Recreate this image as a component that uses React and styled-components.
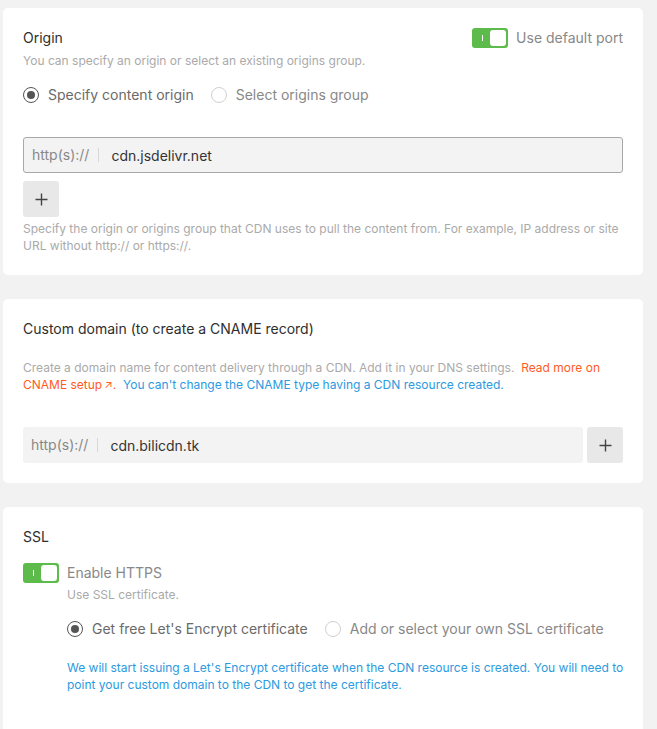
import React from 'react';
import styled, { createGlobalStyle } from 'styled-components';

const GlobalStyle = createGlobalStyle`
  html, body {
    margin: 0;
    padding: 0;
    background: #f2f2f2;
    font-family: Inter, "Noto Sans", "Liberation Sans", sans-serif;
  }
`;

const Page = styled.div`
  display: flex;
  flex-direction: column;
  gap: 24px;
  width: 640px;
  padding: 8px 0 24px 3px;
`;

const Card = styled.section`
  background: #fff;
  border-radius: 5px;
  padding: 20px 20px ${p => p.$bottom || 20}px;
`;

const HeaderRow = styled.div`
  display: flex;
  align-items: center;
  justify-content: space-between;
  height: 20px;
`;

const Title = styled.h2`
  margin: 0;
  font-size: 14px;
  line-height: 20px;
  font-weight: 400;
  color: #2e2e2e;
`;

const Hint = styled.p`
  margin: ${p => p.$top || 0}px ${p => p.$right || 0}px 0 ${p => p.$left || 0}px;
  font-size: 12px;
  line-height: 17px;
  color: ${p => p.$color || '#aaa'};
`;

const Orange = styled.span`
  color: #ff5b1f;
`;

const Blue = styled.span`
  color: #2b9ae0;
`;

const Arrow = styled.span`
  font-size: 11px;
  margin-left: 2px;
`;

const SwitchRow = styled.label`
  display: flex;
  align-items: center;
  gap: 8px;
  font-size: 14px;
  line-height: 20px;
  color: #888;
  margin-top: ${p => p.$top || 0}px;
`;

const Switch = styled.span`
  position: relative;
  flex: none;
  width: 36px;
  height: 20px;
  border-radius: 3px;
  background: #5dbb4b;

  &::before {
    content: '';
    position: absolute;
    left: 10px;
    top: 7px;
    width: 1px;
    height: 6px;
    background: #fff;
  }

  &::after {
    content: '';
    position: absolute;
    right: 2px;
    top: 2px;
    width: 16px;
    height: 16px;
    border-radius: 3px;
    background: #fff;
  }
`;

const RadioGroup = styled.div`
  display: flex;
  align-items: center;
  gap: 17px;
  margin: ${p => p.$top || 0}px 0 0 ${p => p.$left || 0}px;
`;

const RadioLabel = styled.label`
  display: flex;
  align-items: center;
  gap: 9px;
  font-size: 14px;
  line-height: 20px;
  color: ${p => (p.$checked ? '#6a6a6a' : '#888')};
`;

const RadioDot = styled.span`
  position: relative;
  flex: none;
  width: 14px;
  height: 14px;
  border-radius: 50%;
  border: 1px solid ${p => (p.$checked ? '#555' : '#d0d0d0')};
  background: #fff;

  &::after {
    content: '';
    display: ${p => (p.$checked ? 'block' : 'none')};
    position: absolute;
    left: 3px;
    top: 3px;
    width: 8px;
    height: 8px;
    border-radius: 50%;
    background: #555;
  }
`;

const InputRow = styled.div`
  display: flex;
  gap: 4px;
  margin-top: ${p => p.$top || 0}px;
`;

const Field = styled.div`
  flex: 1;
  display: flex;
  align-items: center;
  height: 36px;
  box-sizing: border-box;
  padding: 0 8px;
  border-radius: 3px;
  background: #f3f3f3;
  border: ${p => (p.$focused ? '1px solid #a8a8a8' : 'none')};
  font-size: 14px;
`;

const Prefix = styled.span`
  color: #888;
  padding-right: 9px;
  border-right: 1px solid #d8d8d8;
  line-height: 14px;
`;

const Value = styled.span`
  color: #333;
  padding-left: 12px;
`;

const AddButton = styled.button`
  flex: none;
  display: flex;
  align-items: center;
  justify-content: center;
  width: 36px;
  height: 36px;
  margin-top: ${p => p.$top || 0}px;
  padding: 0;
  border: none;
  border-radius: 3px;
  background: #e8e8e8;
  cursor: pointer;
`;

const PlusIcon = () => (
  <svg width="13" height="13" viewBox="0 0 13 13" fill="none" stroke="#444" strokeWidth="1.4">
    <path d="M6.5 0.5v12M0.5 6.5h12" />
  </svg>
);

const Radio = ({ checked, children }) => (
  <RadioLabel $checked={checked}>
    <RadioDot $checked={checked} />
    {children}
  </RadioLabel>
);

export default function App() {
  return (
    <>
      <GlobalStyle />
      <Page>
        <Card $bottom={21}>
          <HeaderRow>
            <Title>Origin</Title>
            <SwitchRow>
              <Switch />
              Use default port
            </SwitchRow>
          </HeaderRow>
          <Hint $top={4}>You can specify an origin or select an existing origins group.</Hint>
          <RadioGroup $top={16}>
            <Radio checked>Specify content origin</Radio>
            <Radio>Select origins group</Radio>
          </RadioGroup>
          <InputRow $top={32}>
            <Field $focused>
              <Prefix>http(s)://</Prefix>
              <Value>cdn.jsdelivr.net</Value>
            </Field>
          </InputRow>
          <AddButton $top={8}>
            <PlusIcon />
          </AddButton>
          <Hint $top={3}>
            Specify the origin or origins group that CDN uses to pull the content from. For example, IP address or site
            URL without http:// or https://.
          </Hint>
        </Card>

        <Card>
          <Title>Custom domain (to create a CNAME record)</Title>
          <Hint $top={20}>
            Create a domain name for content delivery through a CDN. Add it in your DNS settings.&nbsp;{' '}
            <Orange>
              Read more on CNAME setup<Arrow>↗</Arrow>.
            </Orange>
            &nbsp;{' '}
            <Blue>You can't change the CNAME type having a CDN resource created.</Blue>
          </Hint>
          <InputRow $top={33}>
            <Field>
              <Prefix>http(s)://</Prefix>
              <Value>cdn.bilicdn.tk</Value>
            </Field>
            <AddButton>
              <PlusIcon />
            </AddButton>
          </InputRow>
        </Card>

        <Card $bottom={40}>
          <Title>SSL</Title>
          <SwitchRow $top={16}>
            <Switch />
            Enable HTTPS
          </SwitchRow>
          <Hint $top={3} $left={44}>Use SSL certificate.</Hint>
          <RadioGroup $top={16} $left={44}>
            <Radio checked>Get free Let's Encrypt certificate</Radio>
            <Radio>Add or select your own SSL certificate</Radio>
          </RadioGroup>
          <Hint $top={20} $left={44} $right={-6} $color="#2b9ae0">
            We will start issuing a Let's Encrypt certificate when the CDN resource is created. You will need to
            <br />
            point your custom domain to the CDN to get the certificate.
          </Hint>
        </Card>
      </Page>
    </>
  );
}
